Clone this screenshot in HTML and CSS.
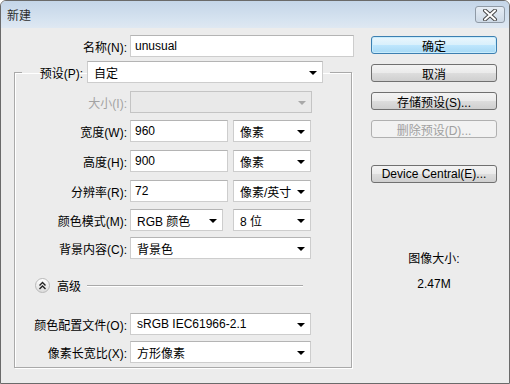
FILE: index.html
```html
<!DOCTYPE html>
<html lang="zh-CN">
<head>
    <meta charset="UTF-8">
    <title>新建</title>
    <link rel="stylesheet" href="styles.css">
</head>
<body>
    <div class="dialog">
        <div class="titlebar">
            <span class="title">新建</span>
            <span class="close">
                <svg width="16" height="12" viewBox="0 0 16 12">
                    <path d="M3 1.5 L13 10.5 M13 1.5 L3 10.5" stroke="#4a4a4a" stroke-width="4" stroke-linecap="round"/>
                    <path d="M3 1.5 L13 10.5 M13 1.5 L3 10.5" stroke="#fff" stroke-width="2" stroke-linecap="round"/>
                </svg>
            </span>
        </div>
        <div class="body">
            <div class="main">
                <div class="row name-row">
                    <label class="lbl">名称(N):</label>
                    <input class="field w-name" type="text" value="unusual">
                </div>
                <fieldset class="group">
                    <legend class="preset">
                        <label class="lbl lbl-preset">预设(P):</label>
                        <div class="select w-preset"><span>自定</span></div>
                    </legend>
                    <div class="row r-size">
                        <label class="lbl off">大小(I):</label>
                        <div class="select off w-size"></div>
                    </div>
                    <div class="row r-width">
                        <label class="lbl">宽度(W):</label>
                        <input class="field w-num" type="text" value="960">
                        <div class="select w-unit"><span>像素</span></div>
                    </div>
                    <div class="row r-height">
                        <label class="lbl">高度(H):</label>
                        <input class="field w-num" type="text" value="900">
                        <div class="select w-unit"><span>像素</span></div>
                    </div>
                    <div class="row r-res">
                        <label class="lbl">分辨率(R):</label>
                        <input class="field w-num" type="text" value="72">
                        <div class="select w-unit"><span>像素/英寸</span></div>
                    </div>
                    <div class="row r-mode">
                        <label class="lbl">颜色模式(M):</label>
                        <div class="select w-mode"><span>RGB 颜色</span></div>
                        <div class="select w-unit"><span>8 位</span></div>
                    </div>
                    <div class="row r-bg">
                        <label class="lbl">背景内容(C):</label>
                        <div class="select w-full"><span>背景色</span></div>
                    </div>
                    <div class="adv">
                        <span class="toggle">
                            <svg width="9" height="9" viewBox="0 0 9 9">
                                <path d="M1.5 4.5 L4.5 1.5 L7.5 4.5 M1.5 8 L4.5 5 L7.5 8" fill="none" stroke="#222" stroke-width="1.4"/>
                            </svg>
                        </span>
                        <span class="adv-text">高级</span>
                        <span class="adv-line"></span>
                    </div>
                    <div class="row r-profile">
                        <label class="lbl">颜色配置文件(O):</label>
                        <div class="select w-full"><span>sRGB IEC61966-2.1</span></div>
                    </div>
                    <div class="row r-aspect">
                        <label class="lbl">像素长宽比(X):</label>
                        <div class="select w-full"><span>方形像素</span></div>
                    </div>
                </fieldset>
            </div>
            <div class="side">
                <button class="btn default">确定</button>
                <button class="btn">取消</button>
                <button class="btn">存储预设(S)...</button>
                <button class="btn off" disabled>删除预设(D)...</button>
                <button class="btn device">Device Central(E)...</button>
                <div class="imgsize">
                    <div class="imgsize-label">图像大小:</div>
                    <div class="imgsize-value">2.47M</div>
                </div>
            </div>
        </div>
    </div>
</body>
</html>
```

FILE: styles.css
```css
* {
    box-sizing: border-box;
}
body {
    margin: 0;
    font-family: "Liberation Sans", "Noto Sans CJK SC", sans-serif;
    font-size: 12px;
    color: #000;
    background: #fff;
}
.dialog {
    width: 510px;
    height: 384px;
    border: 1px solid #6a6a6a;
    border-radius: 6px 6px 0 0;
    background: #ececec;
    overflow: hidden;
    display: flex;
    flex-direction: column;
}
.titlebar {
    height: 27px;
    background: linear-gradient(#c4d5e8, #d6e3f0 70%, #dfe8f2);
    display: flex;
    align-items: center;
    justify-content: space-between;
    padding: 0 4px 0 6px;
}
.title {
    color: #2e2e2e;
}
.close {
    width: 30px;
    height: 17px;
    border: 1px solid #8f9aa6;
    border-radius: 3px;
    background: linear-gradient(#e6edf5, #cdd9e6);
    display: flex;
    align-items: center;
    justify-content: center;
}
.body {
    flex: 1;
    display: flex;
}
.main {
    width: 359px;
    padding: 7px 0 0 13px;
}
.row {
    display: flex;
    align-items: center;
    height: 22px;
}
.name-row {
    padding-left: 1px;
}
.lbl {
    width: 115px;
    padding-right: 3px;
    text-align: right;
    white-space: nowrap;
}
.lbl.off {
    color: #a3a3a3;
}
.field, .select {
    height: 22px;
    border: 1px solid #cdcdcd;
    border-top-color: #b4b4b4;
    background: #fff;
    font: inherit;
    color: #000;
    margin: 0;
}
.field {
    padding: 0 4px;
    outline: none;
}
.select {
    position: relative;
    display: flex;
    align-items: center;
    padding-left: 6px;
    white-space: nowrap;
}
.select::after {
    content: "";
    position: absolute;
    right: 5px;
    top: 9px;
    border-left: 4px solid transparent;
    border-right: 4px solid transparent;
    border-top: 4px solid #000;
}
.select.off {
    background: #e9e9e9;
    border-color: #c4c4c4;
}
.select.off::after {
    border-top-color: #a8a8a8;
}
.w-name {
    width: 224px;
}
.group {
    width: 338px;
    margin: 4px 0 0;
    padding: 0 0 4px;
    border: 1px solid #a9a9a9;
    box-shadow: inset 1px 1px 0 #fff, 1px 1px 0 #fff;
    min-width: 0;
}
.preset {
    margin-left: 7px;
    padding: 0 7px;
    display: flex;
    align-items: center;
}
.lbl-preset {
    width: 58px;
    padding-right: 4px;
}
.w-preset {
    width: 236px;
}
.w-size {
    width: 182px;
}
.w-num {
    width: 98px;
    margin-right: 5px;
}
.w-unit {
    width: 78px;
}
.w-mode {
    width: 93px;
    margin-right: 10px;
}
.w-full {
    width: 181px;
}
.r-size { margin-top: 8px; }
.r-width { margin-top: 7px; }
.r-height { margin-top: 8px; }
.r-res { margin-top: 8px; }
.r-mode { margin-top: 7px; }
.r-bg { margin-top: 6px; }
.r-profile { margin-top: 20px; }
.r-aspect { margin-top: 6px; }
.adv {
    display: flex;
    align-items: center;
    height: 15px;
    margin-top: 19px;
    padding-left: 20px;
}
.toggle {
    width: 15px;
    height: 15px;
    border-radius: 50%;
    border: 1px solid #b9b9b9;
    background: linear-gradient(#ffffff, #dcdcdc);
    display: flex;
    align-items: center;
    justify-content: center;
}
.adv-text {
    margin-left: 7px;
}
.adv-line {
    margin-left: 6px;
    width: 216px;
    height: 2px;
    border-top: 1px solid #a9a9a9;
    border-bottom: 1px solid #fff;
}
.side {
    flex: 1;
    padding: 8px 0 0 11px;
    display: flex;
    flex-direction: column;
    align-items: flex-start;
}
.btn {
    width: 126px;
    height: 18px;
    margin: 0 0 10px;
    padding: 0;
    font: inherit;
    color: #000;
    border: 1px solid #707070;
    border-radius: 3px;
    background: linear-gradient(#f3f3f3, #ebebeb 48%, #dddddd 52%, #cfcfcf);
}
.btn.default {
    border-color: #3c7fb1;
    background: linear-gradient(#eaf6fd, #d9f0fc 48%, #bee6fd 52%, #a7d9f5);
    box-shadow: inset 0 0 0 1px #c8ecfc;
}
.btn.off {
    color: #a0a0a0;
    border-color: #b0b0b0;
    background: #f2f2f2;
}
.btn.device {
    margin-top: 17px;
}
.imgsize {
    width: 126px;
    margin-top: 59px;
    text-align: center;
    line-height: 14px;
}
.imgsize-value {
    margin-top: 11px;
}
```
